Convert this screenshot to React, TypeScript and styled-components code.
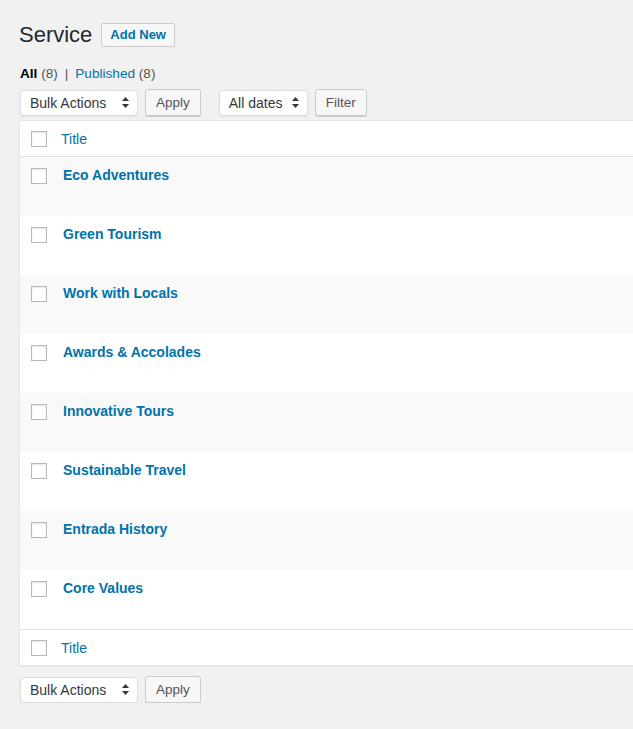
import React from "react";
import styled, { createGlobalStyle } from "styled-components";

const GlobalStyle = createGlobalStyle`
  html, body {
    margin: 0;
    padding: 0;
    background: #f1f1f1;
    overflow: hidden;
  }
  body {
    font-family: "Liberation Sans", Arial, sans-serif;
    color: #23282d;
  }
`;

const services = [
  "Eco Adventures",
  "Green Tourism",
  "Work with Locals",
  "Awards & Accolades",
  "Innovative Tours",
  "Sustainable Travel",
  "Entrada History",
  "Core Values",
];

const Wrap = styled.div`
  padding: 20px 0 0 20px;
  width: 700px;
`;

const HeadingRow = styled.div`
  display: flex;
  align-items: center;
  gap: 9px;
  margin-left: -1px;
`;

const Heading = styled.h1`
  margin: 0;
  font-size: 22px;
  font-weight: 400;
  line-height: 29px;
  color: #23282d;
`;

const AddNew = styled.a`
  display: inline-flex;
  align-items: center;
  height: 22px;
  padding: 0 8px;
  border: 1px solid #ccc;
  border-radius: 2px;
  background: #f7f7f7;
  color: #0073aa;
  font-size: 13px;
  font-weight: 700;
  text-decoration: none;
`;

const SubSub = styled.ul`
  display: flex;
  gap: 7px;
  list-style: none;
  margin: 16px 0 0;
  padding: 0;
  font-size: 13.6px;
  color: #555;
  line-height: 18px;
`;

const SubItem = styled.li<{ current?: boolean }>`
  a {
    color: ${({ current }) => (current ? "#000" : "#0073aa")};
    font-weight: ${({ current }) => (current ? 700 : 400)};
    text-decoration: none;
  }
`;

const Sep = styled.li`
  color: #555;
`;

const Toolbar = styled.div<{ bottom?: boolean }>`
  display: flex;
  align-items: center;
  gap: 7px;
  margin: ${({ bottom }) => (bottom ? "10px 0 0" : "6px 0 0")};
`;

const Select = styled.div<{ w: number }>`
  box-sizing: border-box;
  width: ${({ w }) => w}px;
  height: 26px;
  display: flex;
  align-items: center;
  justify-content: space-between;
  padding: 0 8px 0 9px;
  background: #fff;
  border: 1px solid #ddd;
  border-radius: 4px;
  box-shadow: 0 1px 2px rgba(0, 0, 0, 0.07);
  font-size: 14px;
  color: #32373c;
`;

const Button = styled.button`
  box-sizing: border-box;
  height: 27px;
  padding: 0 10px;
  border: 1px solid #ccc;
  border-radius: 3px;
  background: #f7f7f7;
  box-shadow: 0 1px 0 #ccc;
  color: #555;
  font-family: inherit;
  font-size: 13.5px;
`;

const Gap = styled.span`
  width: 4px;
`;

const Table = styled.div`
  margin-top: 4px;
  background: #fff;
  border: 1px solid #e5e5e5;
  border-right: none;
  box-shadow: 0 1px 1px rgba(0, 0, 0, 0.04);
  margin-left: -1px;
`;

const HeadRow = styled.div<{ foot?: boolean }>`
  display: flex;
  align-items: center;
  height: 35px;
  padding-left: 11px;
  border-${({ foot }) => (foot ? "top" : "bottom")}: 1px solid #e1e1e1;
`;

const Row = styled.div<{ alt: boolean }>`
  display: flex;
  align-items: flex-start;
  height: 59px;
  box-sizing: border-box;
  padding: 11px 0 0 11px;
  background: ${({ alt }) => (alt ? "#f9f9f9" : "#fff")};
`;

const Check = styled.span`
  box-sizing: border-box;
  width: 16px;
  height: 16px;
  border: 1px solid #b4b9be;
  background: #fff;
  box-shadow: inset 0 1px 2px rgba(0, 0, 0, 0.1);
  flex: none;
`;

const ColTitle = styled.a`
  margin-left: 14px;
  font-size: 14px;
  color: #0073aa;
  text-decoration: none;
`;

const RowTitle = styled.a`
  margin: -2px 0 0 16px;
  font-size: 14px;
  line-height: 18px;
  font-weight: 700;
  color: #0073aa;
  text-decoration: none;
`;

const Arrows = () => (
  <svg width="7" height="11" viewBox="0 0 7 11">
    <path d="M3.5 0 L7 4 H0 Z M3.5 11 L7 7 H0 Z" fill="#32373c" />
  </svg>
);

const BulkBar = ({ bottom }: { bottom?: boolean }) => (
  <Toolbar bottom={bottom}>
    <Select w={118}>
      <span>Bulk Actions</span>
      <Arrows />
    </Select>
    <Button>Apply</Button>
    {!bottom && (
      <>
        <Gap />
        <Select w={89}>
          <span>All dates</span>
          <Arrows />
        </Select>
        <Button>Filter</Button>
      </>
    )}
  </Toolbar>
);

export default function App() {
  return (
    <>
      <GlobalStyle />
      <Wrap>
        <HeadingRow>
          <Heading>Service</Heading>
          <AddNew href="#">Add New</AddNew>
        </HeadingRow>
        <SubSub>
          <SubItem current>
            <a href="#">All</a> (8)
          </SubItem>
          <Sep>|</Sep>
          <SubItem>
            <a href="#">Published</a> (8)
          </SubItem>
        </SubSub>
        <BulkBar />
        <Table>
          <HeadRow>
            <Check />
            <ColTitle href="#">Title</ColTitle>
          </HeadRow>
          {services.map((s, i) => (
            <Row key={s} alt={i % 2 === 0}>
              <Check />
              <RowTitle href="#">{s}</RowTitle>
            </Row>
          ))}
          <HeadRow foot>
            <Check />
            <ColTitle href="#">Title</ColTitle>
          </HeadRow>
        </Table>
        <BulkBar bottom />
      </Wrap>
    </>
  );
}
